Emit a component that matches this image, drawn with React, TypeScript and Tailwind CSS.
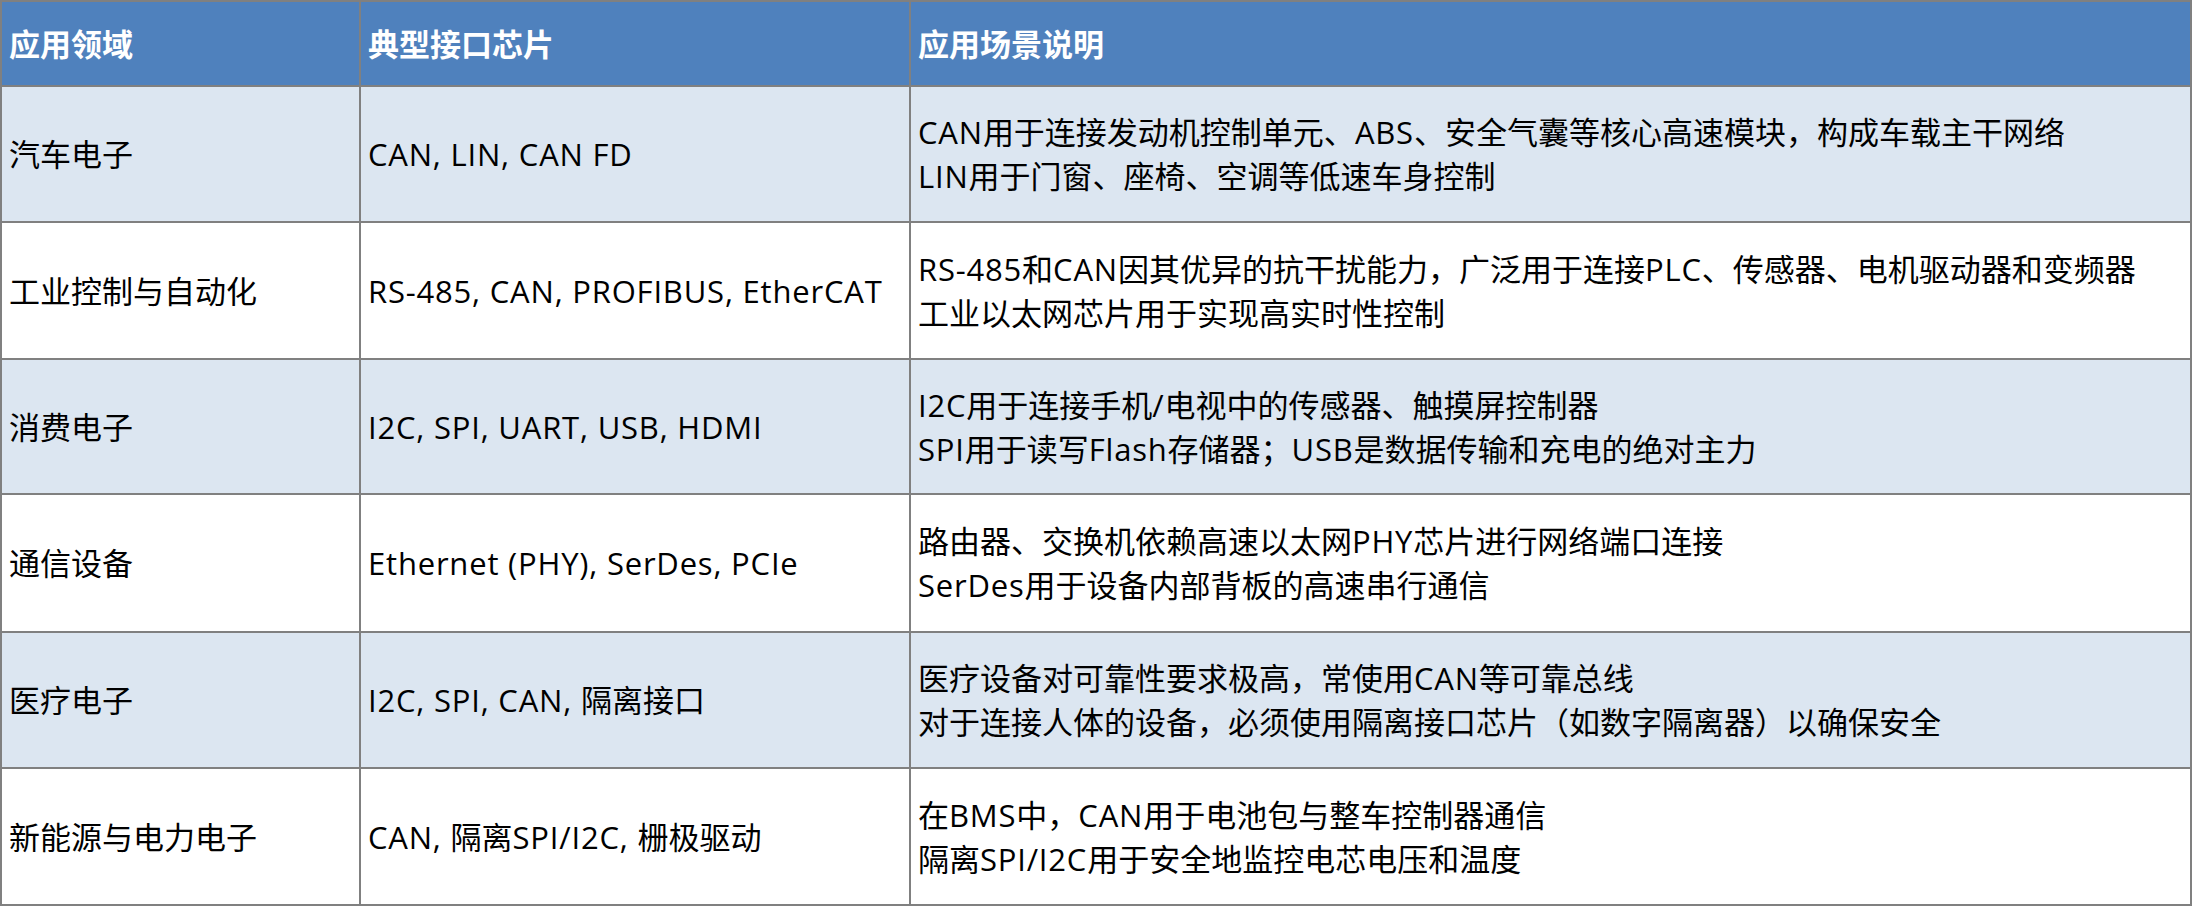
import React from "react";

const rows: { domain: string; chips: string; desc: string[] }[] = [
  {
    domain: "汽车电子",
    chips: "CAN, LIN, CAN FD",
    desc: [
      "CAN用于连接发动机控制单元、ABS、安全气囊等核心高速模块，构成车载主干网络",
      "LIN用于门窗、座椅、空调等低速车身控制",
    ],
  },
  {
    domain: "工业控制与自动化",
    chips: "RS-485, CAN, PROFIBUS, EtherCAT",
    desc: [
      "RS-485和CAN因其优异的抗干扰能力，广泛用于连接PLC、传感器、电机驱动器和变频器",
      "工业以太网芯片用于实现高实时性控制",
    ],
  },
  {
    domain: "消费电子",
    chips: "I2C, SPI, UART, USB, HDMI",
    desc: [
      "I2C用于连接手机/电视中的传感器、触摸屏控制器",
      "SPI用于读写Flash存储器；USB是数据传输和充电的绝对主力",
    ],
  },
  {
    domain: "通信设备",
    chips: "Ethernet (PHY), SerDes, PCIe",
    desc: [
      "路由器、交换机依赖高速以太网PHY芯片进行网络端口连接",
      "SerDes用于设备内部背板的高速串行通信",
    ],
  },
  {
    domain: "医疗电子",
    chips: "I2C, SPI, CAN, 隔离接口",
    desc: [
      "医疗设备对可靠性要求极高，常使用CAN等可靠总线",
      "对于连接人体的设备，必须使用隔离接口芯片（如数字隔离器）以确保安全",
    ],
  },
  {
    domain: "新能源与电力电子",
    chips: "CAN, 隔离SPI/I2C, 栅极驱动",
    desc: [
      "在BMS中，CAN用于电池包与整车控制器通信",
      "隔离SPI/I2C用于安全地监控电芯电压和温度",
    ],
  },
];

function Mixed({ text }: { text: string }) {
  const parts = text.split(/([\x20-\x7E]+)/).filter((p) => p.length > 0);
  return (
    <>
      {parts.map((p, i) =>
        /^[\x20-\x7E]+$/.test(p) ? (
          <span key={i} className="tracking-[0.8px]">
            {p}
          </span>
        ) : (
          <span key={i}>{p}</span>
        )
      )}
    </>
  );
}

export default function App() {
  return (
    <div className="w-[2193px] h-[907px] bg-white text-black">
      <div className="grid w-[2192px] bg-[#808080] p-[2px] gap-[2px] grid-cols-[357px_548px_1279px] grid-rows-[83px_134px_135px_133px_136px_134px_135px] text-[31px] leading-[44px] [font-family:'Open_Sans','Noto_Sans_CJK_SC',sans-serif]">
        <div className="bg-[#4F81BD] flex items-center pl-[7px] font-bold text-white">应用领域</div>
        <div className="bg-[#4F81BD] flex items-center pl-[7px] font-bold text-white">典型接口芯片</div>
        <div className="bg-[#4F81BD] flex items-center pl-[7px] font-bold text-white">应用场景说明</div>
        {rows.map((r, i) => {
          const bg = i % 2 === 0 ? "bg-[#DCE6F1]" : "bg-white";
          return (
            <React.Fragment key={i}>
              <div className={`${bg} flex items-center pl-[7px] whitespace-nowrap`}>
                <Mixed text={r.domain} />
              </div>
              <div className={`${bg} flex items-center pl-[7px] whitespace-nowrap`}>
                <div>
                  <Mixed text={r.chips} />
                </div>
              </div>
              <div className={`${bg} flex flex-col justify-center pl-[7px] whitespace-nowrap`}>
                {r.desc.map((d, j) => (
                  <div key={j}>
                    <Mixed text={d} />
                  </div>
                ))}
              </div>
            </React.Fragment>
          );
        })}
      </div>
    </div>
  );
}
